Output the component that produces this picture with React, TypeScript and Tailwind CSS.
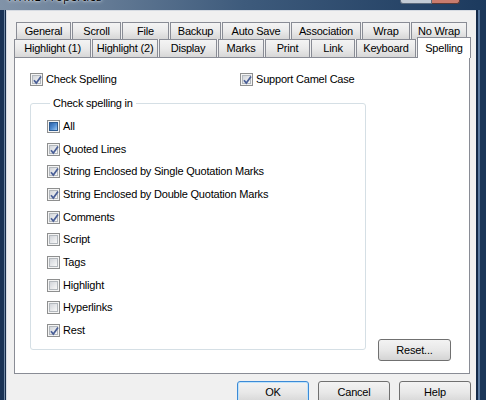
import React from "react";

type St = "on" | "off" | "mixed";

function Box({ state }: { state: St }) {
  return (
    <span className="relative flex w-[13px] h-[13px] shrink-0 items-center justify-center border border-[#8e8f8f] bg-[#f4f4f4]">
      {state === "mixed" ? (
        <span className="w-[9px] h-[9px] border border-[#2c5b91] bg-linear-to-br from-[#2d62a8] via-[#4f8bd0] to-[#9cc7f0]" />
      ) : (
        <span className="w-[9px] h-[9px] border border-[#b3b8bd] bg-linear-to-br from-[#d2d5da] to-[#f8f8f8]" />
      )}
      {state === "on" && (
        <svg className="absolute left-[1px] top-[1px]" width="11" height="11" viewBox="0 0 11 11">
          <path d="M2 5.2 L4.3 8 L9 1.5" fill="none" stroke="#4a5f97" strokeWidth="1.7" />
        </svg>
      )}
    </span>
  );
}

function Check({ state, label, w }: { state: St; label: string; w?: string }) {
  return (
    <div className={"flex items-center gap-[3px] " + (w ?? "")}>
      <Box state={state} />
      <span className="leading-[13px]">{label}</span>
    </div>
  );
}

function Tab({ label, w }: { label: string; w: string }) {
  return (
    <div
      className={
        "flex items-center justify-center border border-b-0 border-[#898c95] bg-linear-to-b from-[#f4f4f4] via-[#eaeaea] to-[#d7d7d7] " +
        w
      }
    >
      {label}
    </div>
  );
}

function Btn({ label, def }: { label: string; def?: boolean }) {
  return (
    <div
      className={
        "flex w-[72px] h-[23px] items-center justify-center rounded-[3px] border bg-linear-to-b from-[#f3f3f3] via-[#e8e8e8] to-[#d4d4d4] " +
        (def ? "border-[#3c8ad6] shadow-[inset_0_0_0_1px_#bfe3fb]" : "border-[#707070]")
      }
    >
      {label}
    </div>
  );
}

export default function App() {
  const items: [St, string][] = [
    ["mixed", "All"],
    ["on", "Quoted Lines"],
    ["on", "String Enclosed by Single Quotation Marks"],
    ["on", "String Enclosed by Double Quotation Marks"],
    ["on", "Comments"],
    ["off", "Script"],
    ["off", "Tags"],
    ["off", "Highlight"],
    ["off", "Hyperlinks"],
    ["on", "Rest"],
  ];
  return (
    <div className="w-[486px] h-[400px] overflow-hidden flex flex-col bg-[#1b3658] text-[11px] tracking-[-0.2px] text-black font-['Liberation_Sans',Arial,sans-serif]">
      {/* title bar */}
      <div className="flex h-[10px] shrink-0 bg-linear-to-r from-[#8193a8] via-[#3e5b7c] to-[#1c3a5e]">
        <div className="flex-1 overflow-hidden pl-[8px]">
          <div className="-mt-[10px] text-[12px] leading-[13px] tracking-normal text-black [text-shadow:0_0_4px_#ffffff,0_0_2px_#ffffff] font-['Open_Sans',sans-serif]">
            HTML Properties
          </div>
        </div>
        <div className="flex h-[4px] mr-[26px]">
          <div className="w-[32px] h-[4px] rounded-bl-[3px] border border-t-0 border-[#5d6b7d] bg-[#c4ccd6]" />
          <div className="w-[28px] h-[4px] rounded-br-[3px] border border-t-0 border-l-0 border-[#5d3a36] bg-[#c97c6e]" />
        </div>
      </div>
      {/* body */}
      <div className="flex flex-1">
        <div className="flex w-[6px] shrink-0">
          <div className="w-[4px] bg-[#193254]" />
          <div className="w-[1px] bg-[#6f86a2]" />
          <div className="w-[1px] bg-[#142a48]" />
        </div>
        <div className="flex-1 flex flex-col bg-[#f0f0f0] border-l border-t border-[#d6dbe2] pt-[11px] pl-[7px] pr-[5px]">
          {/* tabs row 1 */}
          <div className="flex h-[17px] gap-[1px] pl-[2px]">
            <Tab label="General" w="w-[55px]" />
            <Tab label="Scroll" w="w-[49px]" />
            <Tab label="File" w="w-[47px]" />
            <Tab label="Backup" w="w-[51px]" />
            <Tab label="Auto Save" w="w-[68px]" />
            <Tab label="Association" w="w-[70px]" />
            <Tab label="Wrap" w="w-[48px]" />
            <Tab label="No Wrap" w="w-[56px]" />
          </div>
          {/* tabs row 2 */}
          <div className="flex h-[18px] gap-[1px] items-end">
            <Tab label="Highlight (1)" w="w-[77px] h-[18px]" />
            <Tab label="Highlight (2)" w="w-[66px] h-[18px]" />
            <Tab label="Display" w="w-[58px] h-[18px]" />
            <Tab label="Marks" w="w-[46px] h-[18px]" />
            <Tab label="Print" w="w-[45px] h-[18px]" />
            <Tab label="Link" w="w-[44px] h-[18px]" />
            <Tab label="Keyboard" w="w-[60px] h-[18px]" />
            <div className="relative z-10 -mb-[1px] flex h-[21px] w-[54px] items-start justify-center pt-[2px] border border-b-0 border-[#898c95] bg-white">
              Spelling
            </div>
          </div>
          {/* panel */}
          <div className="flex h-[317px] w-[456px] flex-col border border-[#898c95] bg-white pl-[15px] pt-[15px]">
            <div className="flex h-[13px]">
              <Check state="on" label="Check Spelling" w="w-[210px]" />
              <Check state="on" label="Support Camel Case" />
            </div>
            <div className="mt-[11px] flex items-end">
              <fieldset className="w-[336px] rounded-[3px] border border-[#d5dfe5] pl-[16px] pb-[7px] mb-[11px]">
                <legend className="ml-[3px] px-[3px] leading-[13px]">Check spelling in</legend>
                <div className="flex flex-col pt-[5px]">
                  {items.map(([s, l]) => (
                    <div key={l} className="flex h-[22.7px] items-center">
                      <Check state={s} label={l} />
                    </div>
                  ))}
                </div>
              </fieldset>
              <div className="ml-[12px] flex h-[22px] w-[73px] items-center justify-center rounded-[3px] border border-[#707070] bg-linear-to-b from-[#f3f3f3] via-[#e8e8e8] to-[#d4d4d4]">
                Reset...
              </div>
            </div>
          </div>
          {/* buttons */}
          <div className="mt-[7px] flex justify-end gap-[9px]">
            <Btn label="OK" def />
            <Btn label="Cancel" />
            <Btn label="Help" />
          </div>
        </div>
        <div className="flex w-[10px] shrink-0">
          <div className="w-[2px] bg-[#142a48]" />
          <div className="w-[2px] bg-[#5b7aa0]" />
          <div className="w-[6px] bg-[#1b3658]" />
        </div>
      </div>
    </div>
  );
}
